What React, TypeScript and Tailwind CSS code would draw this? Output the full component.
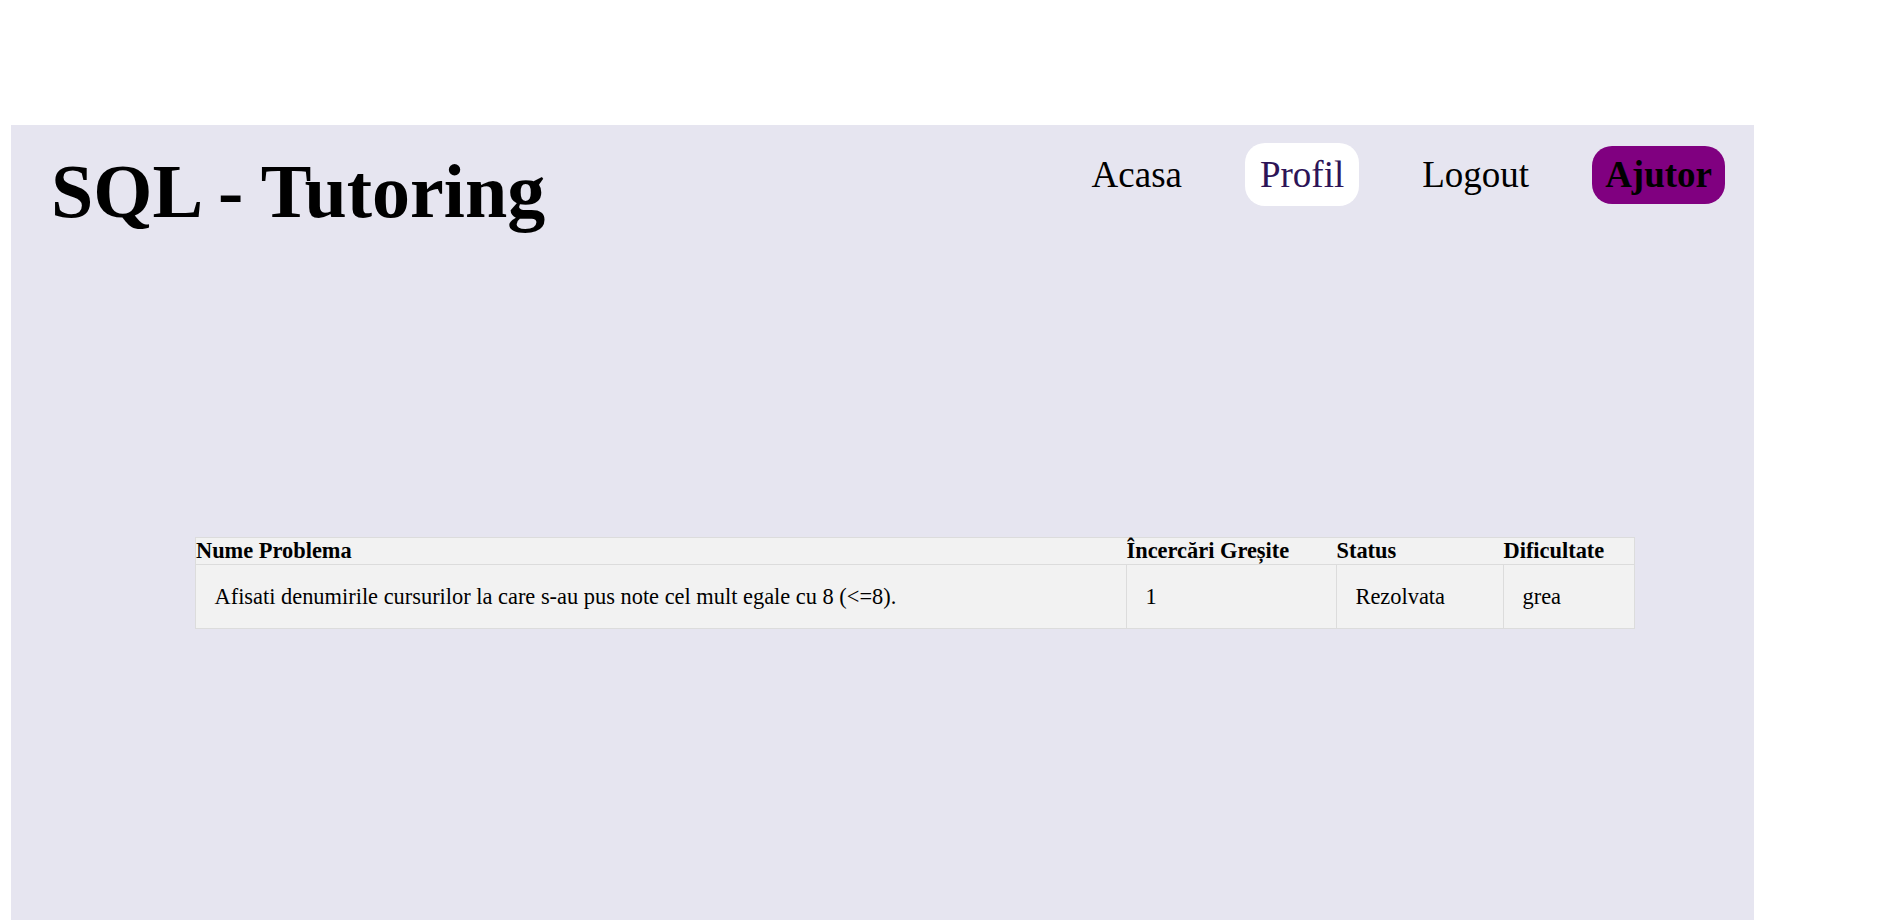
const rows = [
  {
    nume: "Afisati denumirile cursurilor la care s-au pus note cel mult egale cu 8 (<=8).",
    incercari: "1",
    status: "Rezolvata",
    dificultate: "grea",
  },
];

const App = () => {
  return (
    <div className="min-h-screen bg-white font-['Liberation_Serif',serif] text-black">
      <div className="pt-[125px] pl-[11px]">
        <main className="w-[1743px] h-[795px] bg-[#e6e5f0]">
          <header className="flex justify-between items-start pl-[40px] pr-[29px]">
            <h1 className="mt-[22.5px] text-[76px] font-bold leading-[normal]">SQL - Tutoring</h1>
            <nav className="mt-[18.3px] flex items-center gap-[48px] text-[37px] leading-[normal]">
              <a href="#" className="px-[15px] py-[9.75px]">
                Acasa
              </a>
              <a href="#" className="px-[15px] py-[9.75px] bg-white text-[#2d1457] rounded-[20px]">
                Profil
              </a>
              <a href="#" className="px-[15px] py-[9.75px]">
                Logout
              </a>
              <button className="px-[13px] py-[7.5px] bg-[#800080] font-bold rounded-[20px] text-black">
                Ajutor
              </button>
            </nav>
          </header>
          <table className="mt-[302.5px] ml-[184px] w-[1439px] table-fixed border-collapse border border-[#dcdcdc] bg-[#f2f2f2] text-[22.4px] leading-[normal]">
            <colgroup>
              <col className="w-[931px]" />
              <col className="w-[210px]" />
              <col className="w-[167px]" />
              <col className="w-[131px]" />
            </colgroup>
            <thead>
              <tr className="border-b border-[#dcdcdc]">
                <th className="text-left font-bold p-0">Nume Problema</th>
                <th className="text-left font-bold p-0">Încercări Greșite</th>
                <th className="text-left font-bold p-0">Status</th>
                <th className="text-left font-bold p-0">Dificultate</th>
              </tr>
            </thead>
            <tbody>
              {rows.map((r, i) => (
                <tr key={i}>
                  <td className="border border-[#dcdcdc] p-[18.5px]">{r.nume}</td>
                  <td className="border border-[#dcdcdc] p-[18.5px]">{r.incercari}</td>
                  <td className="border border-[#dcdcdc] p-[18.5px]">{r.status}</td>
                  <td className="border border-[#dcdcdc] p-[18.5px]">{r.dificultate}</td>
                </tr>
              ))}
            </tbody>
          </table>
        </main>
      </div>
    </div>
  );
};

export default App;
